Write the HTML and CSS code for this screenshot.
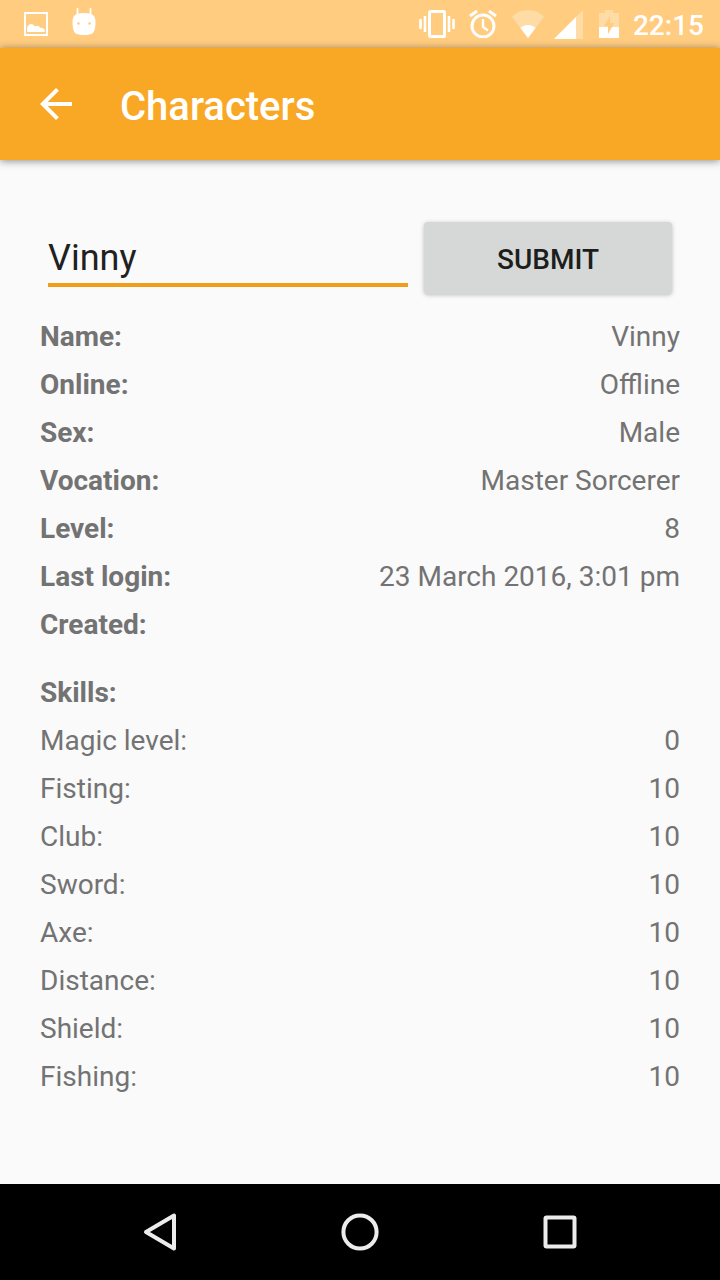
FILE: index.html
```html
<!DOCTYPE html>
<html lang="en">
<head>
  <meta charset="UTF-8">
  <meta name="viewport" content="width=device-width, initial-scale=1">
  <title>Characters</title>
  <link rel="stylesheet" href="styles.css">
</head>
<body>

<div class="status-bar">
  <div class="status-icons notifications">
    <svg width="24" height="24" viewBox="0 0 24 24">
      <rect x="1" y="1" width="22" height="22" fill="none" stroke="#fff" stroke-width="2"/>
      <path d="M3 20V16Q4 12 7.500 12Q9.500 12 11 14.500Q13 13 15 14.500L17 16Q21 15.500 21 20Z" fill="#fff"/>
    </svg>
    <svg class="android" width="24" height="28" viewBox="0 0 24 28">
      <path d="M5.500 1V7M18.500 1V7" stroke="#fff" stroke-width="1.800" stroke-linecap="round"/>
      <path fill="#fff" fill-rule="evenodd" d="M5 6Q12 4 19 6Q23.500 7 23.500 14Q23.500 22 21 25Q18 27 12 27Q6 27 3 25Q0.500 22 0.500 14Q0.500 7 5 6ZM6.500 14.200a1.300 1.300 0 1 0 0 2.600a1.300 1.300 0 0 0 0-2.600ZM17.500 14.200a1.300 1.300 0 1 0 0 2.600a1.300 1.300 0 0 0 0-2.600Z"/>
    </svg>
  </div>
  <div class="status-icons">
    <svg width="36" height="28" viewBox="0 0 36 28">
      <rect x="10.500" y="1.500" width="15" height="25" rx="1" fill="none" stroke="#fff" stroke-width="3"/>
      <path d="M1.500 9V19M6 6V22M30 6V22M34.500 9V19" stroke="#fff" stroke-width="2.600"/>
    </svg>
    <svg class="alarm" width="28" height="28" viewBox="0 0 28 28">
      <circle cx="14" cy="16" r="11" fill="none" stroke="#fff" stroke-width="3"/>
      <path d="M14 9V17L19 20.500" fill="none" stroke="#fff" stroke-width="2.400"/>
      <path d="M1 6L8 1M20 1L27 6" stroke="#fff" stroke-width="3"/>
    </svg>
    <svg class="wifi" width="34" height="30" viewBox="0 0 34 30">
      <path d="M17 29L1 8Q7 1 17 1Q27 1 33 8Z" fill="#fff" opacity=".3"/>
      <path d="M17 29L9.500 19Q12 16 17 16Q22 16 24.500 19Z" fill="#fff"/>
    </svg>
    <svg class="signal" width="29" height="29" viewBox="0 0 29 29">
      <path d="M0 29L29 0V29Z" fill="#fff" opacity=".3"/>
      <path d="M0 29L22 7V29Z" fill="#fff"/>
    </svg>
    <svg class="battery" width="20" height="28" viewBox="0 0 20 28">
      <path d="M0 17V3H6V0H14V3H20V17H13L15 13H11V6L5 16H9V17Z" fill="#fff" opacity=".3"/>
      <path d="M0 17H9V24L13 17H20V28H0Z" fill="#fff"/>
    </svg>
    <span class="clock">22:15</span>
  </div>
</div>

<header class="toolbar">
  <button class="back-button" type="button" aria-label="Back">
    <svg width="32" height="32" viewBox="0 0 32 32">
      <path d="M32 14H7.700L18.900 2.800L16 0L0 16L16 32L18.800 29.200L7.700 18H32Z" fill="#fff"/>
    </svg>
  </button>
  <h1>Characters</h1>
</header>

<main class="content">
  <form class="search">
    <input class="search-input" type="text" value="Vinny" aria-label="Character name">
    <button class="submit-button" type="submit">SUBMIT</button>
  </form>

  <table class="details">
    <tr><th scope="row">Name:</th><td>Vinny</td></tr>
    <tr><th scope="row">Online:</th><td>Offline</td></tr>
    <tr><th scope="row">Sex:</th><td>Male</td></tr>
    <tr><th scope="row">Vocation:</th><td>Master Sorcerer</td></tr>
    <tr><th scope="row">Level:</th><td>8</td></tr>
    <tr><th scope="row">Last login:</th><td>23 March 2016, 3:01 pm</td></tr>
    <tr><th scope="row">Created:</th><td></td></tr>
  </table>

  <table class="details skills">
    <caption>Skills:</caption>
    <tr><th scope="row">Magic level:</th><td>0</td></tr>
    <tr><th scope="row">Fisting:</th><td>10</td></tr>
    <tr><th scope="row">Club:</th><td>10</td></tr>
    <tr><th scope="row">Sword:</th><td>10</td></tr>
    <tr><th scope="row">Axe:</th><td>10</td></tr>
    <tr><th scope="row">Distance:</th><td>10</td></tr>
    <tr><th scope="row">Shield:</th><td>10</td></tr>
    <tr><th scope="row">Fishing:</th><td>10</td></tr>
  </table>
</main>

<nav class="nav-bar">
  <button type="button" aria-label="Back">
    <svg width="40" height="40" viewBox="0 0 40 40">
      <path d="M34 3.500V36.500L6 20Z"/>
    </svg>
  </button>
  <button type="button" aria-label="Home">
    <svg width="40" height="40" viewBox="0 0 40 40">
      <circle cx="20" cy="20" r="16.600"/>
    </svg>
  </button>
  <button type="button" aria-label="Recent apps">
    <svg width="40" height="40" viewBox="0 0 40 40">
      <rect x="5.500" y="5.500" width="29" height="29" rx="1"/>
    </svg>
  </button>
</nav>

</body>
</html>
```
FILE: styles.css
```css
* {
  margin: 0;
  padding: 0;
  box-sizing: border-box;
}

body {
  font-family: Roboto, 'Noto Sans', sans-serif;
  font-size: 28px;
  background: #fafafa;
  color: #737373;
  min-height: 100vh;
  display: flex;
  flex-direction: column;
}

button {
  border: none;
  background: none;
  font-family: inherit;
  cursor: pointer;
}

svg {
  display: block;
}

/* Status bar */
.status-bar {
  height: 48px;
  padding: 0 16px 0 24px;
  display: flex;
  justify-content: space-between;
  background: #ffcc80;
}

.status-icons {
  display: flex;
  align-items: center;
}

.notifications {
  gap: 24px;
}

.android {
  margin-bottom: 4px;
}

.alarm {
  margin-left: 14px;
}

.wifi {
  margin-left: 14px;
}

.signal {
  margin-left: 9px;
}

.battery {
  margin-left: 16px;
}

.clock {
  margin-left: 14px;
  padding-top: 2px;
  color: #fff;
  font-weight: 500;
}

/* Toolbar */
.toolbar {
  position: relative;
  height: 112px;
  padding: 0 40px;
  display: flex;
  align-items: center;
  gap: 48px;
  background: #f9a825;
  box-shadow: 0 1px 8px rgba(0, 0, 0, 0.45);
}

.toolbar h1 {
  padding-top: 4px;
  color: #fff;
  font-size: 40px;
  font-weight: 500;
}

/* Content */
.content {
  flex: 1;
  padding: 62px 40px 0;
}

.search {
  display: flex;
  align-items: flex-start;
  gap: 16px;
  padding: 0 8px;
  margin-bottom: 19px;
}

.search-input {
  flex: 360;
  min-width: 0;
  height: 65px;
  padding-top: 10px;
  border: none;
  border-bottom: 4px solid #f09e1a;
  outline: none;
  background: transparent;
  color: #212121;
  font-family: inherit;
  font-size: 36px;
}

.submit-button {
  flex: 248;
  height: 72px;
  padding-top: 2px;
  border-radius: 4px;
  background: #d6d8d7;
  box-shadow: 0 1px 4px rgba(0, 0, 0, 0.25);
  color: #1c1e1d;
  font-size: 28px;
  font-weight: 500;
}

.details {
  width: 100%;
  border-collapse: collapse;
  line-height: 48px;
}

.details tr {
  height: 48px;
}

.details th,
.details caption {
  text-align: left;
  font-weight: 700;
}

.details td {
  text-align: right;
}

.skills {
  margin-top: 20px;
}

.skills th {
  font-weight: 400;
}

/* Navigation bar */
.nav-bar {
  height: 96px;
  padding: 0 60px;
  display: flex;
  background: #000;
}

.nav-bar button {
  flex: 1;
  display: flex;
  align-items: center;
  justify-content: center;
}

.nav-bar svg {
  fill: none;
  stroke: #ececec;
  stroke-width: 4;
  stroke-linejoin: round;
}
```
